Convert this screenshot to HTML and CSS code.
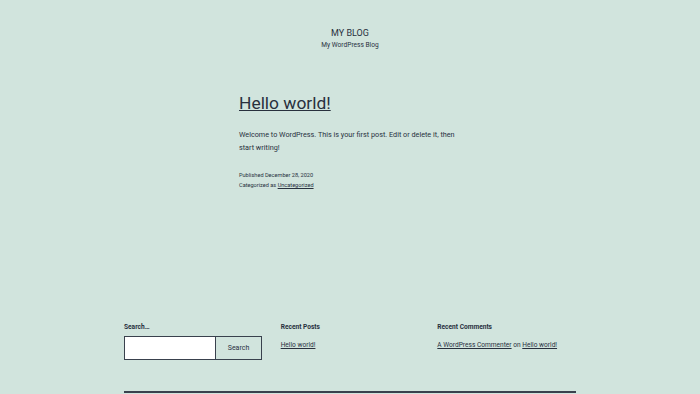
FILE: index.html
```html
<!DOCTYPE html>
<html lang="en">
<head>
  <meta charset="UTF-8" />
  <title>My Blog</title>
  <link rel="stylesheet" href="styles.css">
</head>
<body>
<header class="site-header">
  <p class="site-title">MY BLOG</p>
  <p class="site-description">My WordPress Blog</p>
</header>

<main class="site-main">
  <article class="post">
    <h1 class="entry-title"><a href="#">Hello world!</a></h1>
    <div class="entry-content">
      <p>Welcome to WordPress. This is your first post. Edit or delete it, then start writing!</p>
    </div>
    <footer class="entry-footer">
      <span>Published December 28, 2020</span>
      <span>Categorized as <a href="#">Uncategorized</a></span>
    </footer>
  </article>
</main>

<!-- widgets -->
<aside class="widget-area">
  <section class="widget">
    <label class="widget-title" for="s">Search…</label>
    <form class="search-form">
      <input type="text" id="s" class="search-field">
      <button type="button" class="search-submit">Search</button>
    </form>
  </section>
  <section class="widget">
    <h2 class="widget-title">Recent Posts</h2>
    <ul>
      <li><a href="#">Hello world!</a></li>
    </ul>
  </section>
  <section class="widget">
    <h2 class="widget-title">Recent Comments</h2>
    <ul>
      <li><a href="#">A WordPress Commenter</a> on <a href="#">Hello world!</a></li>
    </ul>
  </section>
</aside>
<div class="footer-line"></div>
</body>
</html>
```
FILE: styles.css
```css
body {
  margin: 0;
  background: #d1e4dd;
  color: #28303d;
  font-family: Roboto, "Liberation Sans", sans-serif;
}

a {
  color: #28303d;
}

.site-header {
  padding-top: 27px;
  text-align: center;
}
.site-title {
  margin: 0;
  font-size: 9px;
  line-height: 12px;
}
.site-description {
  margin: 0;
  font-size: 6.6px;
  line-height: 12px;
}

.site-main {
  display: flex;
  justify-content: center;
  padding-top: 40px;
}
.post {
  width: 222px;
}
.entry-title {
  margin: 0;
  font-size: 17.4px;
  font-weight: 400;
  line-height: 24px;
}
.entry-title a {
  text-decoration-thickness: 1px;
}
.entry-content p {
  margin: 13px 0 0;
  font-size: 7.25px;
  line-height: 13px;
}
.entry-footer {
  display: flex;
  flex-direction: column;
  margin-top: 16px;
  font-size: 5.6px;
  line-height: 10px;
}

.widget-area {
  display: grid;
  grid-template-columns: repeat(3, 1fr);
  gap: 18px;
  width: 452px;
  margin: 132px auto 0;
}
.widget-title {
  display: block;
  margin: 0;
  font-size: 6.6px;
  font-weight: 700;
  line-height: 10px;
}
.widget ul {
  list-style: none;
  margin: 8px 0 0;
  padding: 0;
  font-size: 6.6px;
  line-height: 10px;
}
.search-form {
  display: flex;
  margin-top: 4px;
}
.search-field {
  box-sizing: border-box;
  width: 92px;
  height: 24px;
  margin: 0;
  border: 1.5px solid #39414d;
  background: #fff;
}
.search-submit {
  box-sizing: border-box;
  width: 46px;
  height: 24px;
  margin: 0;
  border: 1.5px solid #39414d;
  border-left-width: 0;
  background: #d1e4dd;
  color: #28303d;
  font-family: Roboto, "Liberation Sans", sans-serif;
  font-size: 7px;
}

.footer-line {
  width: 452px;
  margin: 31px auto 0;
  border-top: 2px solid #39414d;
}
```
